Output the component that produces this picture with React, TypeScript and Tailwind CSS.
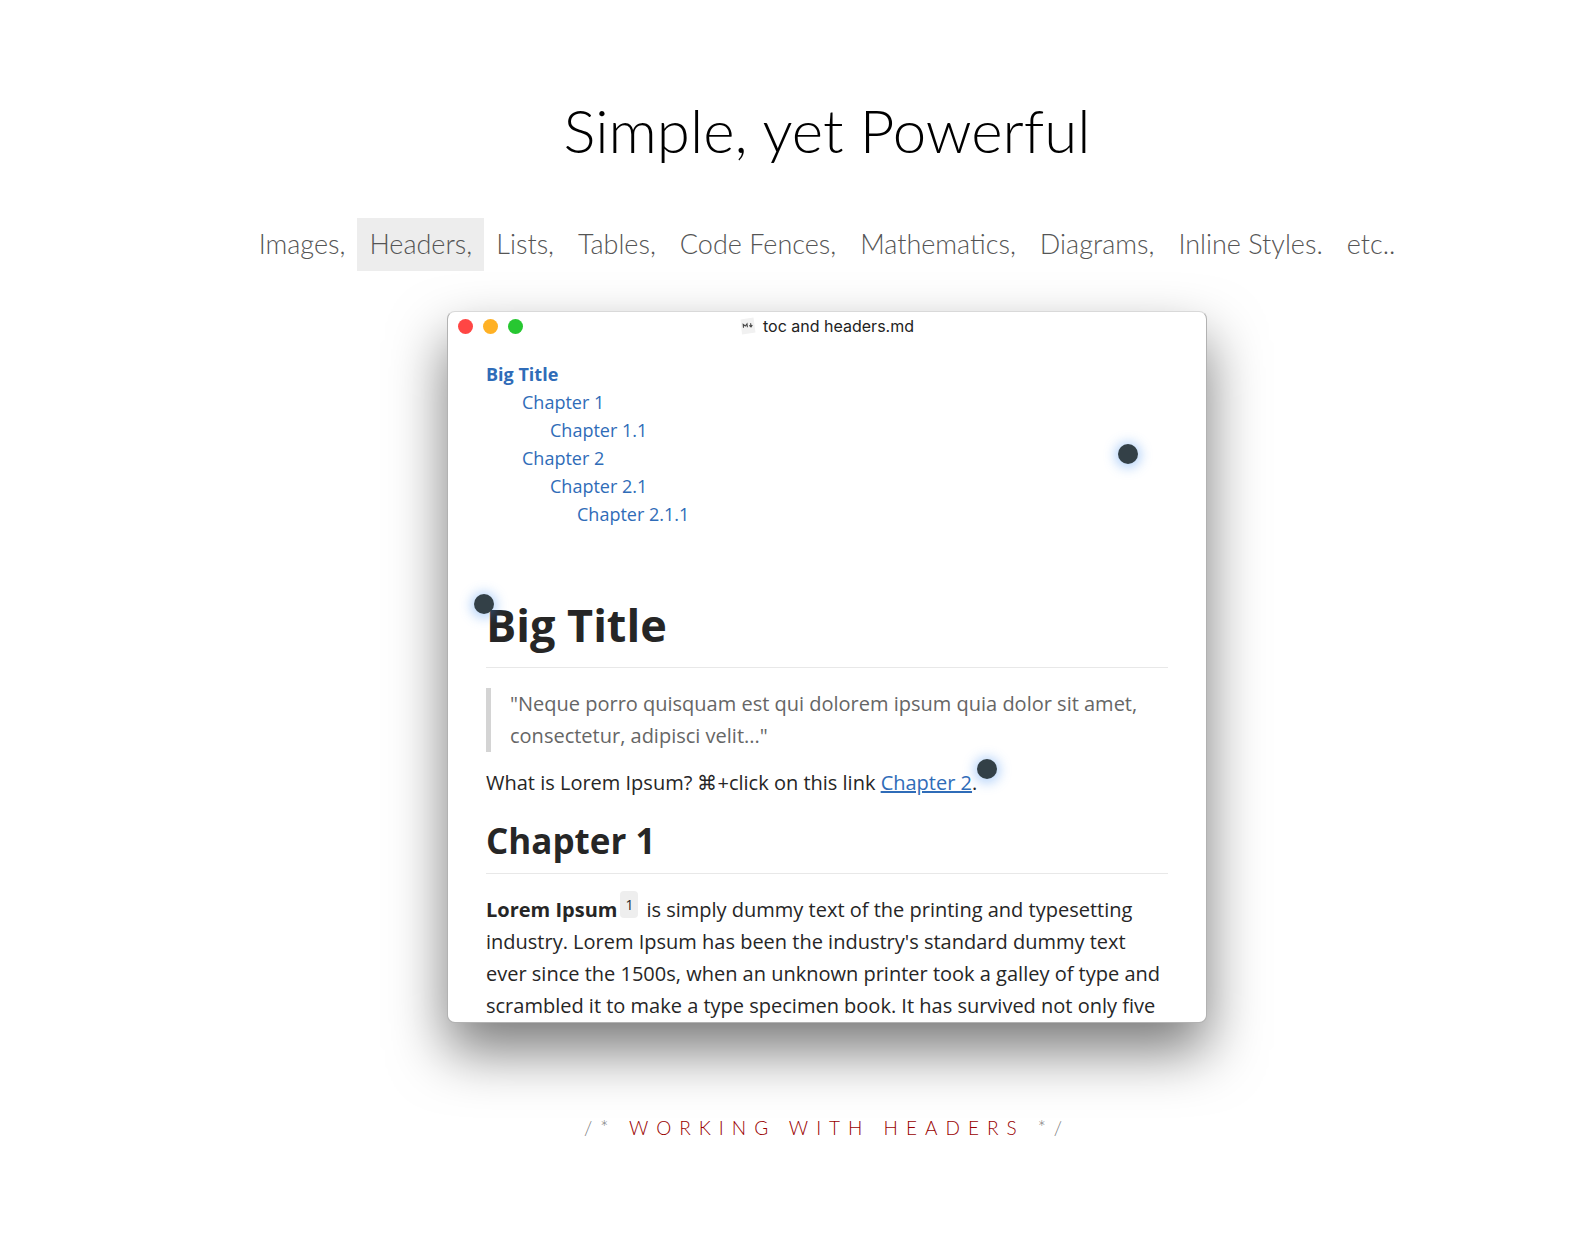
const topics = [
  "Images,",
  "Headers,",
  "Lists,",
  "Tables,",
  "Code Fences,",
  "Mathematics,",
  "Diagrams,",
  "Inline Styles.",
  "etc..",
];

function MarkdownFileIcon() {
  return (
    <svg width="16" height="18" viewBox="0 0 16 18" aria-hidden="true">
      <path d="M0.5 2.5 L13.5 0.5 L15.5 15.5 L2 17.5 Z" fill="#f1f1f1" />
      <path
        d="M3.5 10.8L3.2 7.4L5.3 9L7 6.9L7.4 10.3M10.6 6.2L11 9.6M9.3 8.4L11 10L12.3 8"
        fill="none"
        stroke="#444"
        strokeWidth="1.1"
      />
    </svg>
  );
}

function Hotspot({ className, label }: { className: string; label: string }) {
  return (
    <button
      type="button"
      aria-label={label}
      className={`absolute size-5 rounded-full bg-[#334047] shadow-[0_1px_12px_3px_rgba(70,145,240,0.4)] ${className}`}
    />
  );
}

function Toc() {
  return (
    <nav aria-label="Table of contents" className="flex flex-col items-start text-lg leading-7 text-[#2f6cb8]">
      <a href="#big-title" className="font-bold">Big Title</a>
      <a href="#chapter-1" className="ml-9">Chapter 1</a>
      <a href="#chapter-1-1" className="ml-16">Chapter 1.1</a>
      <a href="#chapter-2" className="ml-9">Chapter 2</a>
      <a href="#chapter-2-1" className="ml-16">Chapter 2.1</a>
      <a href="#chapter-2-1-1" className="ml-[91px]">Chapter 2.1.1</a>
    </nav>
  );
}

export default function App() {
  return (
    <main className="flex min-h-screen flex-col items-center bg-white pt-[94px] pb-24 pl-[72px] font-['Lato',sans-serif]">
      <h1 className="text-[60px] leading-[72px] font-light text-black">Simple, yet Powerful</h1>

      <nav aria-label="Features" className="mt-[52px] flex text-[27px] font-light text-[#555]">
        {topics.map((topic) => (
          <button
            key={topic}
            type="button"
            className={`h-[53px] px-3 whitespace-nowrap ${topic === "Headers," ? "bg-[#ededed]" : ""}`}
          >
            {topic}
          </button>
        ))}
      </nav>

      <section className="relative mt-10 w-full max-w-[760px] rounded-lg border border-black/30 border-t-black/15 bg-white font-['Open_Sans',sans-serif] text-[#262626] shadow-[0_28px_56px_rgba(0,0,0,0.52)]">
        <header className="relative flex h-7 items-center justify-center gap-[7px] font-['Inter',sans-serif] text-base text-[#222]">
          <div className="absolute left-[10px] flex gap-[10px]">
            <span className="size-[15px] rounded-full bg-[#ff4644]" />
            <span className="size-[15px] rounded-full bg-[#ffb125]" />
            <span className="size-[15px] rounded-full bg-[#27c731]" />
          </div>
          <MarkdownFileIcon />
          <span>toc and headers.md</span>
        </header>

        <div className="px-[38px] pt-5 text-xl leading-8">
          <Toc />
          <h2 id="big-title" className="mt-[65px] border-b border-[#e8e8e8] pb-[10px] text-[45px] leading-[64px] font-bold">
            Big Title
          </h2>
          <blockquote className="mt-5 border-l-[5px] border-[#d4d4d4] pl-[19px] text-[#666]">
            "Neque porro quisquam est qui dolorem ipsum quia dolor sit amet, consectetur, adipisci velit..."
          </blockquote>
          <p className="mt-[15px]">
            What is Lorem Ipsum? ⌘+click on this link{" "}
            <a href="#chapter-2" className="text-[#2f6cb8] underline">Chapter 2</a>.
          </p>
          <h3 id="chapter-1" className="mt-4 border-b border-[#e8e8e8] pb-[6px] text-[35px] leading-[52px] font-bold">
            Chapter 1
          </h3>
          <p className="mt-5">
            <strong>Lorem Ipsum</strong>
            <sup className="mr-2 ml-[3px] rounded bg-[#eee] px-[5px] py-1 text-sm leading-none">1</sup>
            is simply dummy text of the printing and typesetting industry. Lorem Ipsum has been the
            industry's standard dummy text ever since the 1500s, when an unknown printer took a galley of
            type and scrambled it to make a type specimen book. It has survived not only five
          </p>
        </div>

        <Hotspot label="About the table of contents" className="top-[132px] right-[68px]" />
        <Hotspot label="About headings" className="top-[282px] left-[26px]" />
        <Hotspot label="About internal links" className="top-[447px] right-[209px]" />
      </section>

      <p className="mt-[93px] text-[19px] leading-6 font-light tracking-[8px] text-[#777]">
        /* <span className="text-[#990000]">WORKING WITH HEADERS</span> */
      </p>
    </main>
  );
}
